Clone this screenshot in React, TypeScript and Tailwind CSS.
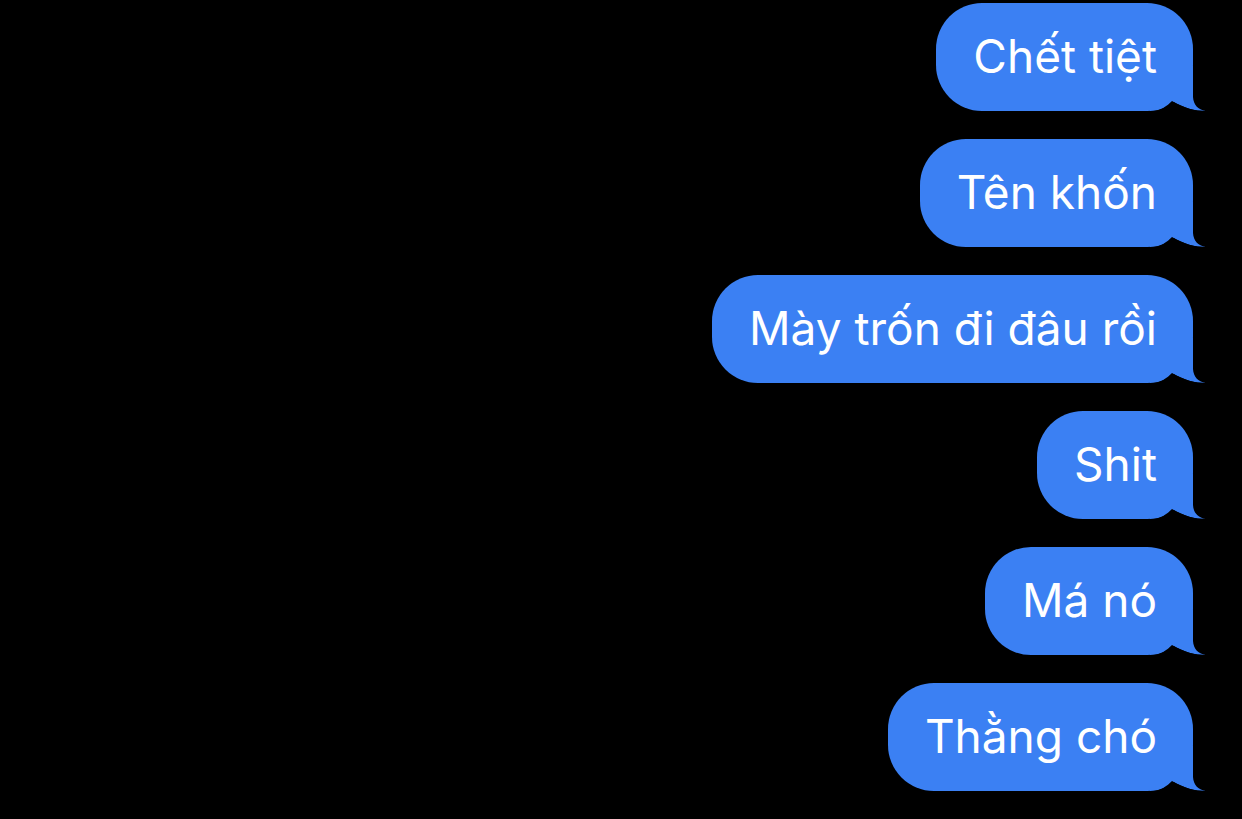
const messages = ["Chết tiệt", "Tên khốn", "Mày trốn đi đâu rồi", "Shit", "Má nó", "Thằng chó"];

function Tail() {
  // tail drawn over the bottom-right corner of the bubble
  return (
    <svg
      className="absolute -right-[13px] bottom-0 h-[51px] w-[56px]"
      viewBox="0 0 56 51"
      aria-hidden
    >
      <path
        d="M43 6 L43 37 C43.5 45 48 49.5 55.5 51 C45 51 34 48 22 41 C17 46 11 51 0 51 L0 6 Z"
        fill="#3b80f3"
      />
      <path d="M55.5 51 C45 51 34 48 22 41 C17 46 11 51 0 51 L0 52 L56 52 Z" fill="#000" />
    </svg>
  );
}

function Bubble({ text }: { text: string }) {
  return (
    <div className="relative flex h-[108px] items-center rounded-[46px] bg-[#3b80f3] pl-[37px] pr-[36px]">
      <span className="relative z-10 -mt-[2px] whitespace-nowrap text-[46px] leading-none text-white">{text}</span>
      <Tail />
    </div>
  );
}

export default function App() {
  return (
    <div
      className="flex h-[819px] w-full flex-col items-end gap-[28px] overflow-hidden bg-black pr-[49px] pt-[3px]"
      style={{ fontFamily: "Inter, 'Noto Sans', sans-serif" }}
    >
      {messages.map((m) => (
        <Bubble key={m} text={m} />
      ))}
    </div>
  );
}
